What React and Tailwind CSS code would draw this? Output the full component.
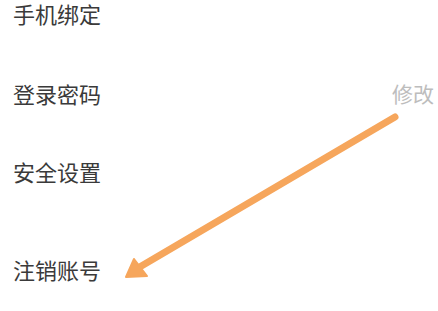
import React from 'react';

const rows = [
  { label: '手机绑定', gap: 'mt-0' },
  { label: '登录密码', gap: 'mt-[54px]', action: '修改' },
  { label: '安全设置', gap: 'mt-[52px]' },
  { label: '注销账号', gap: 'mt-[72px]' },
];

export default function App() {
  return (
    <div
      className="relative w-[438px] h-[311px] bg-white overflow-hidden"
      style={{ fontFamily: '"Noto Sans CJK SC", "Noto Sans", sans-serif' }}
    >
      <div className="flex flex-col pl-[13px] pr-[4px]">
        {rows.map((row) => (
          <div key={row.label} className={`${row.gap} flex items-center justify-between h-[26px]`}>
            <span className="text-[22px] leading-[26px] text-[#3a3a3a]">{row.label}</span>
            {row.action && (
              <span className="text-[21px] leading-[26px] text-[#bdbdbd]">{row.action}</span>
            )}
          </div>
        ))}
      </div>

      {/* annotation arrow */}
      <svg className="absolute inset-0 pointer-events-none" width="438" height="311" viewBox="0 0 438 311">
        <line x1="395" y1="117" x2="138" y2="268" stroke="#f6a65c" strokeWidth="7" strokeLinecap="round" />
        <polygon points="126,277 134,259 147,276" fill="#f6a65c" stroke="#f6a65c" strokeWidth="2" strokeLinejoin="round" />
      </svg>
    </div>
  );
}
